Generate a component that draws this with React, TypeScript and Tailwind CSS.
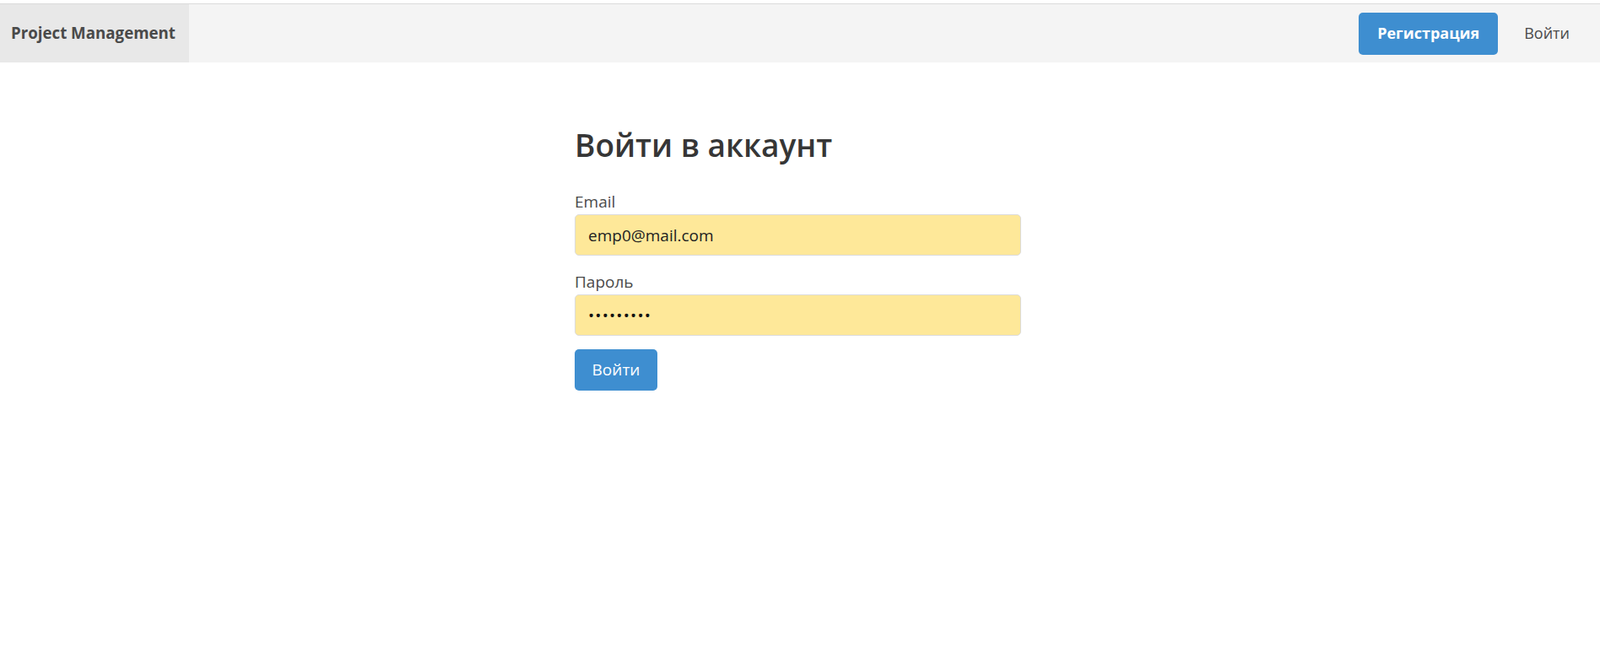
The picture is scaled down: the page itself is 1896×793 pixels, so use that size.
import { useState } from "react";

const font = { fontFamily: '"Open Sans", "Noto Sans", sans-serif' };

const Navbar = () => (
  <nav className="mt-[4px] flex h-[70px] items-stretch border-t border-[#dbdbdb] bg-[#f4f4f4]">
    <div className="flex w-[224px] items-center bg-[#e8e8e8] pl-[13px]">
      <span className="text-[18.7px] font-bold text-[#4a4a4a]">Project Management</span>
    </div>
    <div className="ml-auto flex items-center gap-[31px] pr-[36px]">
      <button className="h-[50px] w-[165px] rounded-[5px] bg-[#3e8ed0] text-[18px] font-bold text-white">
        Регистрация
      </button>
      <a className="text-[18px] text-[#4a4a4a]">Войти</a>
    </div>
  </nav>
);

const Field = ({
  label,
  type,
  value,
  onChange,
}: {
  label: string;
  type: string;
  value: string;
  onChange: (v: string) => void;
}) => (
  <label className="block">
    <span className="block text-[19px] leading-[28px] text-[#4a4a4a]">{label}</span>
    <input
      type={type}
      value={value}
      onChange={(e) => onChange(e.target.value)}
      className={
        type === "password"
          ? "mt-[1px] block h-[49px] w-full rounded-[5px] border border-[#dbdbdb] bg-[#fee899] px-[15px] text-[19px] tracking-[1.2px] text-[#111] outline-none"
          : "mt-[1px] block h-[49px] w-full rounded-[5px] border border-[#dbdbdb] bg-[#fee899] px-[15px] text-[19px] text-[#222] outline-none"
      }
    />
  </label>
);

export default function App() {
  const [email, setEmail] = useState("emp0@mail.com");
  const [password, setPassword] = useState("123456789");

  return (
    <div className="min-h-screen bg-white" style={font}>
      <Navbar />
      <main className="mx-auto w-[534px] pr-[5px] pt-[73px]">
        <h1 className="text-[37px] font-semibold leading-[50px] text-[#363636]">Войти в аккаунт</h1>
        <form className="mt-[28px] flex flex-col gap-[17px]" onSubmit={(e) => e.preventDefault()}>
          <Field label="Email" type="email" value={email} onChange={setEmail} />
          <Field label="Пароль" type="password" value={password} onChange={setPassword} />
        </form>
        <button className="mt-[16px] h-[49px] w-[98px] rounded-[5px] bg-[#3e8ed0] text-[19px] text-white">
          Войти
        </button>
      </main>
    </div>
  );
}
